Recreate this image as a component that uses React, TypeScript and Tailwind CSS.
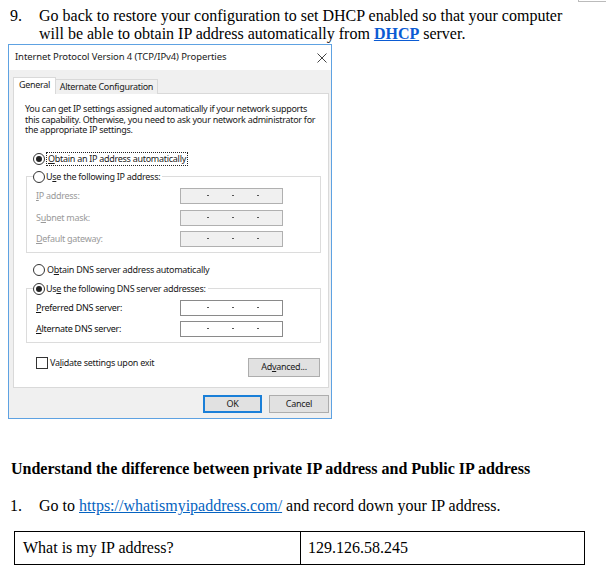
import React from "react";

const U = ({ c }: { c: string }) => <span className="underline underline-offset-[1px]">{c}</span>;

function Radio({ on }: { on?: boolean }) {
  return (
    <span className="inline-flex h-[12px] w-[12px] shrink-0 items-center justify-center rounded-full border border-[#333] bg-white">
      {on && <span className="h-[6px] w-[6px] rounded-full bg-[#222]" />}
    </span>
  );
}

function IpField({ disabled }: { disabled?: boolean }) {
  return (
    <div
      className={`flex h-[16px] w-[103px] items-center border ${
        disabled ? "border-[#b0b0b0] bg-[#f0f0f0]" : "border-[#8a8a8a] bg-white"
      }`}
    >
      <span className="ml-[26px] h-[1.5px] w-[1.5px] bg-[#555]" />
      <span className="ml-[23.5px] h-[1.5px] w-[1.5px] bg-[#555]" />
      <span className="ml-[23.5px] h-[1.5px] w-[1.5px] bg-[#555]" />
    </div>
  );
}

function Row({ label, disabled, mt }: { label: React.ReactNode; disabled?: boolean; mt: string }) {
  return (
    <div className={`flex h-[16px] items-center ${mt}`}>
      <span className={`w-[153px] pl-[9px] ${disabled ? "text-[#9a9a9a]" : "text-[#111]"}`}>{label}</span>
      <IpField disabled={disabled} />
    </div>
  );
}

export default function App() {
  return (
    <div className="relative h-[576px] w-[606px] overflow-hidden bg-white text-black">
      <div className="absolute left-[578px] top-[-8px] h-[10px] w-[30px] border border-[#bbb]" />
      {/* Step 9 */}
      <div className="flex pt-[7px] font-['Liberation_Serif',serif] text-[16px] leading-[18px]">
        <span className="w-[39px] pl-[10px]">9.</span>
        <div className="w-[540px]">
          <p>Go back to restore your configuration to set DHCP enabled so that your computer</p>
          <p>
            <span>will be able to obtain IP address automatically from </span>
            <b className="text-[#0b5bd3] underline">DHCP</b>
            <span> server.</span>
          </p>
        </div>
      </div>

      {/* Dialog */}
      <div className="ml-[8px] mt-[1px] flex h-[375px] w-[324px] flex-col border border-[#5ea2e2] font-['Noto_Sans',sans-serif] text-[9px] text-[#1a1a1a]">
        <div className="flex h-[25px] shrink-0 items-center justify-between bg-white pl-[6px] pr-[3px]">
          <span className="text-[9.5px] tracking-[-0.1px]">Internet Protocol Version 4 (TCP/IPv4) Properties</span>
          <svg width="12" height="12" viewBox="0 0 12 12">
            <path d="M1.5 1.5 L10.5 10.5 M10.5 1.5 L1.5 10.5" stroke="#444" strokeWidth="1" />
          </svg>
        </div>
        <div className="flex flex-1 flex-col bg-[#f0f0f0] pl-[4px] pr-[2px] pt-[7px] tracking-[-0.28px]">
          {/* tabs */}
          <div className="relative z-10 flex h-[17px] items-start">
            <div className="flex h-[17px] w-[43px] items-center justify-center border border-b-0 border-[#d9d9d9] bg-white pb-[2px]">
              General
            </div>
            <div className="mt-[2px] flex h-[15px] w-[102px] items-center justify-center border border-l-0 border-b-0 border-[#d9d9d9] bg-[#f0f0f0]">
              Alternate Configuration
            </div>
          </div>
          {/* panel */}
          <div className="-mt-[1px] flex h-[295px] flex-col border border-[#d9d9d9] bg-white pt-[10px]">
            <p className="pl-[11px] pr-[6px] leading-[10.5px]">
              You can get IP settings assigned automatically if your network supports this capability. Otherwise, you
              need to ask your network administrator for the appropriate IP settings.
            </p>
            <div className="ml-[19px] mt-[16px] flex h-[14px] items-center">
              <Radio on />
              <span className="ml-[1px] border border-dotted border-[#222] px-[1px] leading-[12px]">
                <U c="O" />
                btain an IP address automatically
              </span>
            </div>
            <fieldset className="ml-[12px] mt-[4px] w-[295px] border border-[#dcdcdc] pb-[5px]">
              <legend className="ml-[6px] flex h-[14px] items-center bg-white pr-[2px]">
                <Radio />
                <span className="ml-[1px]">
                  U<U c="s" />e the following IP address:
                </span>
              </legend>
              <Row
                mt="mt-[4px]"
                disabled
                label={
                  <>
                    <U c="I" />P address:
                  </>
                }
              />
              <Row
                mt="mt-[6px]"
                disabled
                label={
                  <>
                    S<U c="u" />bnet mask:
                  </>
                }
              />
              <Row
                mt="mt-[5px]"
                disabled
                label={
                  <>
                    <U c="D" />efault gateway:
                  </>
                }
              />
            </fieldset>
            <div className="ml-[19px] mt-[10px] flex h-[14px] items-center">
              <Radio />
              <span className="ml-[2px]">
                O<U c="b" />tain DNS server address automatically
              </span>
            </div>
            <fieldset className="ml-[12px] mt-[5px] w-[295px] border border-[#dcdcdc] pb-[5px]">
              <legend className="ml-[6px] flex h-[14px] items-center bg-white pr-[2px]">
                <Radio on />
                <span className="ml-[1px]">
                  Us<U c="e" /> the following DNS server addresses:
                </span>
              </legend>
              <Row
                mt="mt-[4px]"
                label={
                  <>
                    <U c="P" />referred DNS server:
                  </>
                }
              />
              <Row
                mt="mt-[5px]"
                label={
                  <>
                    <U c="A" />lternate DNS server:
                  </>
                }
              />
            </fieldset>
            <div className="mt-[14px] flex items-start justify-between pl-[22px] pr-[8px]">
              <div className="flex h-[12px] items-center">
                <span className="h-[12px] w-[12px] border border-[#333] bg-white" />
                <span className="ml-[2px]">
                  Va<U c="l" />idate settings upon exit
                </span>
              </div>
              <div className="mt-[1px] flex h-[19px] w-[72px] items-center justify-center border border-[#adadad] bg-[#e1e1e1]">
                Ad<U c="v" />anced...
              </div>
            </div>
          </div>
          {/* buttons */}
          <div className="mt-[7px] flex justify-end gap-[7px]">
            <div className="flex h-[18px] w-[59px] items-center justify-center border-2 border-[#1a7fd8] bg-[#e1e1e1]">
              OK
            </div>
            <div className="flex h-[18px] w-[60px] items-center justify-center border border-[#adadad] bg-[#e1e1e1]">
              Cancel
            </div>
          </div>
        </div>
      </div>

      {/* Section */}
      <div className="font-['Liberation_Serif',serif] text-[16px] leading-[18px]">
        <p className="mt-[41px] pl-[11px] font-bold">
          Understand the difference between private IP address and Public IP address
        </p>
        <div className="mt-[19px] flex">
          <span className="w-[39px] pl-[10px]">1.</span>
          <p>
            Go to <span className="text-[#0563c1] underline">https://whatismyipaddress.com/</span> and record down your
            IP address.
          </p>
        </div>
        <div className="ml-[14px] mt-[16px] flex h-[34px] w-[571px] border border-black">
          <div className="flex w-[286px] items-center border-r border-black pl-[8px]">What is my IP address?</div>
          <div className="flex flex-1 items-center pl-[7px]">129.126.58.245</div>
        </div>
      </div>
    </div>
  );
}
